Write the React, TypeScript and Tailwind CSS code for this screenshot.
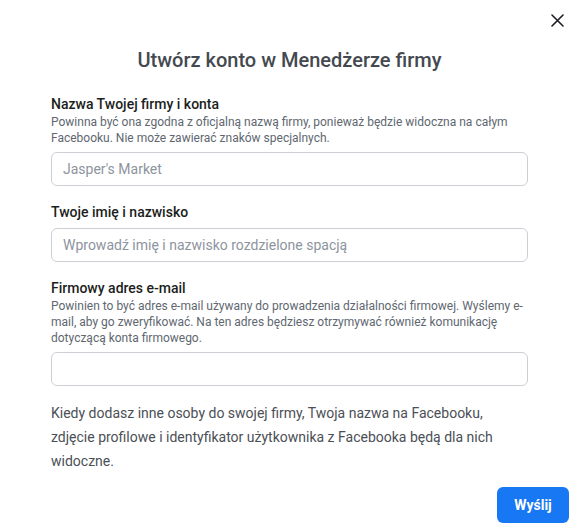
import React from "react";

export default function App() {
  return (
    <div
      className="relative w-[583px] h-[528px] bg-white overflow-hidden"
      style={{ fontFamily: "Roboto, 'Liberation Sans', sans-serif" }}
    >
      <button className="absolute left-[549px] top-[12px] w-[16px] h-[16px] flex items-center justify-center">
        <svg width="13" height="13" viewBox="0 0 13 13">
          <path d="M1 1L12 12M12 1L1 12" stroke="#1c1e21" strokeWidth="1.6" strokeLinecap="round" />
        </svg>
      </button>

      <h1 className="pt-[46px] text-center text-[20px] leading-[28px] font-medium text-[#444950] pr-[4px]">
        Utwórz konto w Menedżerze firmy
      </h1>

      <div className="px-[51px] w-[477px] box-content">
        <div className="mt-[21px]">
          <div className="text-[14px] leading-[18px] font-medium text-[#1c1e21]">Nazwa Twojej firmy i konta</div>
          <div className="text-[12px] leading-[16px] text-[#606770] mt-[1px]">
            Powinna być ona zgodna z oficjalną nazwą firmy, ponieważ będzie widoczna na całym Facebooku. Nie może zawierać znaków specjalnych.
          </div>
          <div className="mt-[6px] h-[34px] w-[477px] rounded-[6px] border border-[#ccd0d5] flex items-center px-[11px] text-[14px] text-[#8d949e]">
            Jasper's Market
          </div>
        </div>

        <div className="mt-[17px]">
          <div className="text-[14px] leading-[18px] font-medium text-[#1c1e21]">Twoje imię i nazwisko</div>
          <div className="mt-[7px] h-[34px] w-[477px] rounded-[6px] border border-[#ccd0d5] flex items-center px-[11px] text-[14px] text-[#8d949e]">
            Wprowadź imię i nazwisko rozdzielone spacją
          </div>
        </div>

        <div className="mt-[17px]">
          <div className="text-[14px] leading-[18px] font-medium text-[#1c1e21]">Firmowy adres e-mail</div>
          <div className="text-[12px] leading-[16px] text-[#606770] mt-[1px]">
            Powinien to być adres e-mail używany do prowadzenia działalności firmowej. Wyślemy e-mail, aby go zweryfikować. Na ten adres będziesz otrzymywać również komunikację dotyczącą konta firmowego.
          </div>
          <div className="mt-[6px] h-[34px] w-[477px] rounded-[6px] border border-[#ccd0d5]" />
        </div>

        <p className="mt-[15px] text-[14px] leading-[24px] text-[#4b4f56] pr-[20px]">
          Kiedy dodasz inne osoby do swojej firmy, Twoja nazwa na Facebooku, zdjęcie profilowe i identyfikator użytkownika z Facebooka będą dla nich widoczne.
        </p>
      </div>

      <button className="absolute left-[497px] top-[487px] w-[72px] h-[36px] rounded-[6px] bg-[#1877f2] text-white text-[14px] font-bold">
        Wyślij
      </button>
    </div>
  );
}
